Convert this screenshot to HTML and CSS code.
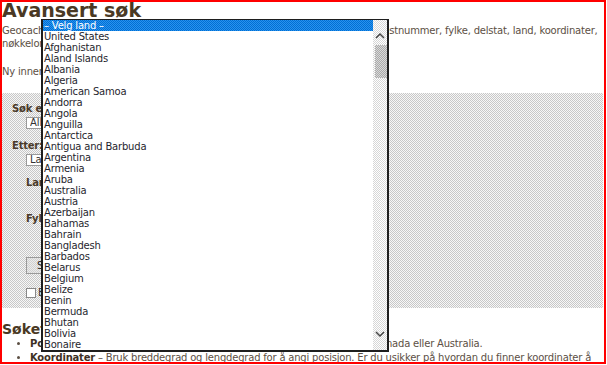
FILE: index.html
```html
<!DOCTYPE html>
<html lang="no">

<head>
    <meta charset="UTF-8">
    <meta name="viewport" content="width=device-width, initial-scale=1">
    <title>Avansert søk</title>
    <link rel="stylesheet" href="styles.css">
</head>

<body>

    <div class="page">
        <h1 class="page-title">Avansert søk</h1>
        <p class="intro">Geocacher kan søkes etter på mange forskjellige måter: etter adresse, gater, postnummer, fylke, delstat, land, koordinater,<br>nøkkelord, brukernavn eller GC-kode.</p>
        <p class="intro new-user">Ny innen geocaching? Les vår guide for nybegynnere før du starter.</p>

        <div class="search-box">
            <div class="field">
                <label class="field-label">Søk etter type:</label>
                <select class="field-select indent">
                    <option>Alle cachetyper</option>
                </select>
            </div>
            <div class="field">
                <label class="field-label">Etter:</label>
                <select class="field-select indent">
                    <option>Land</option>
                </select>
            </div>
            <div class="field-inline field-land indent">
                <label class="field-label">Land:</label>
                <select class="field-select">
                    <option>– Velg land –</option>
                </select>
            </div>
            <div class="field-inline field-county indent">
                <label class="field-label">Fylke:</label>
                <select class="field-select">
                    <option>– Velg fylke –</option>
                </select>
            </div>
            <button type="button" class="search-btn indent">Søk</button>
            <label class="check-row indent"><input type="checkbox"> Bare vis cacher jeg ikke har funnet</label>
        </div>

        <h2 class="tips-title">Søketips</h2>
        <ul class="tips">
            <li><strong>Postnummer</strong> – Søk etter cacher på postnummer i USA, Storbritannia, Canada eller Australia.</li>
            <li><strong>Koordinater</strong> – Bruk breddegrad og lengdegrad for å angi posisjon. Er du usikker på hvordan du finner koordinater å bruke, kan du lese hjelpesidene våre.</li>
        </ul>

        <div class="country-list">
            <ul class="country-options">
                <li class="selected">– Velg land –</li>
                <li>United States</li>
                <li>Afghanistan</li>
                <li>Aland Islands</li>
                <li>Albania</li>
                <li>Algeria</li>
                <li>American Samoa</li>
                <li>Andorra</li>
                <li>Angola</li>
                <li>Anguilla</li>
                <li>Antarctica</li>
                <li>Antigua and Barbuda</li>
                <li>Argentina</li>
                <li>Armenia</li>
                <li>Aruba</li>
                <li>Australia</li>
                <li>Austria</li>
                <li>Azerbaijan</li>
                <li>Bahamas</li>
                <li>Bahrain</li>
                <li>Bangladesh</li>
                <li>Barbados</li>
                <li>Belarus</li>
                <li>Belgium</li>
                <li>Belize</li>
                <li>Benin</li>
                <li>Bermuda</li>
                <li>Bhutan</li>
                <li>Bolivia</li>
                <li>Bonaire</li>
            </ul>
            <div class="scrollbar">
                <div class="scroll-btn scroll-up">
                    <svg width="10" height="8" viewBox="0 0 10 8"><polyline points="1,6 5,2 9,6" fill="none" stroke="#444" stroke-width="1.5"/></svg>
                </div>
                <div class="scroll-thumb"></div>
                <div class="scroll-track"></div>
                <div class="scroll-btn scroll-down">
                    <svg width="10" height="8" viewBox="0 0 10 8"><polyline points="1,2 5,6 9,2" fill="none" stroke="#444" stroke-width="1.5"/></svg>
                </div>
            </div>
        </div>
    </div>

</body>

</html>
```

FILE: styles.css
```css
body {
    margin: 0;
    background-color: #fff;
    font-family: "DejaVu Sans", Verdana, sans-serif;
    font-size: 10px;
    letter-spacing: -0.2px;
    color: #5c4f44;
}

.page {
    position: relative;
    width: 602px;
    height: 360px;
    border: 2px solid #f00;
    overflow: hidden;
}

.page-title {
    margin: -2px 0 0;
    font-size: 19px;
    line-height: 20px;
    letter-spacing: 0;
    color: #4a3924;
}

.intro {
    margin: 4px 0 0;
    line-height: 13px;
}

.new-user {
    margin-top: 15px;
}

.search-box {
    display: flex;
    flex-direction: column;
    align-items: flex-start;
    margin: 15px 1px 0 0;
    padding: 9px 10px 9px;
    background: repeating-conic-gradient(#c8c8c8 0 25%, #f7f7f7 0 50%) 0 0 / 2px 2px;
}

.indent {
    margin-left: 14px;
}

.field {
    display: flex;
    flex-direction: column;
    align-items: flex-start;
    margin-bottom: 10px;
}

.field-inline {
    display: flex;
    align-items: center;
    gap: 30px;
    height: 13px;
}

.field-land {
    margin-bottom: 23px;
}

.field-county {
    margin-bottom: 32px;
}

.field-label {
    font-weight: bold;
    line-height: 13px;
    color: #4a3a2a;
}

.field-select {
    appearance: none;
    width: 200px;
    height: 12px;
    padding: 0 3px;
    border: 1px solid #9a9a9a;
    border-radius: 0;
    background-color: #fff;
    font-family: inherit;
    font-size: 10px;
    line-height: 10px;
    color: #333;
}

.field .field-select {
    margin-top: 2px;
}

.search-btn {
    display: block;
    height: 17px;
    padding: 0 10px;
    border: 1px solid #9a9a9a;
    background: repeating-conic-gradient(#d0d0d0 0 25%, #ececec 0 50%) 0 0 / 2px 2px;
    font-family: inherit;
    font-size: 10px;
    color: #222;
}

.check-row {
    display: flex;
    align-items: center;
    gap: 2px;
    margin-top: 12px;
    line-height: 13px;
    color: #333;
}

.check-row input {
    appearance: none;
    margin: 0;
    width: 10px;
    height: 10px;
    border: 1px solid #888;
    background-color: #fff;
}

.tips-title {
    margin: 13px 0 0;
    font-size: 14px;
    line-height: 16px;
    letter-spacing: 0;
    color: #4a3924;
}

.tips {
    margin: 0;
    padding-left: 28px;
    line-height: 14px;
}

.tips strong {
    color: #3e3024;
}

.country-list {
    position: absolute;
    left: 39px;
    top: 17px;
    display: flex;
    width: 344px;
    height: 330px;
    border: 2px solid #1e1e1e;
    border-top-width: 1px;
    background-color: #fff;
}

.country-options {
    flex: 1;
    margin: 0;
    padding: 0;
    list-style: none;
    line-height: 11px;
    color: #1f1f2e;
}

.country-options li {
    height: 11px;
    padding-left: 1px;
    white-space: nowrap;
}

.country-options .selected {
    background: repeating-conic-gradient(#0070d4 0 25%, #2a92ee 0 50%) 0 0 / 2px 2px;
    color: #fff;
}

.scrollbar {
    width: 14px;
    display: flex;
    flex-direction: column;
    background: repeating-conic-gradient(#d6d6d6 0 25%, #fff 0 50%) 0 0 / 2px 2px;
}

.scroll-btn {
    display: flex;
    justify-content: center;
}

.scroll-up {
    padding-top: 12px;
    height: 12px;
}

.scroll-down {
    align-items: flex-end;
    padding-bottom: 12px;
    height: 12px;
}

.scroll-down svg,
.scroll-up svg {
    display: block;
}

.scroll-thumb {
    height: 33px;
    margin: 1px 0 0 2px;
    background: repeating-conic-gradient(#aaaaaa 0 25%, #d8d8d8 0 50%) 0 0 / 2px 2px;
}

.scroll-track {
    flex: 1;
}
```
